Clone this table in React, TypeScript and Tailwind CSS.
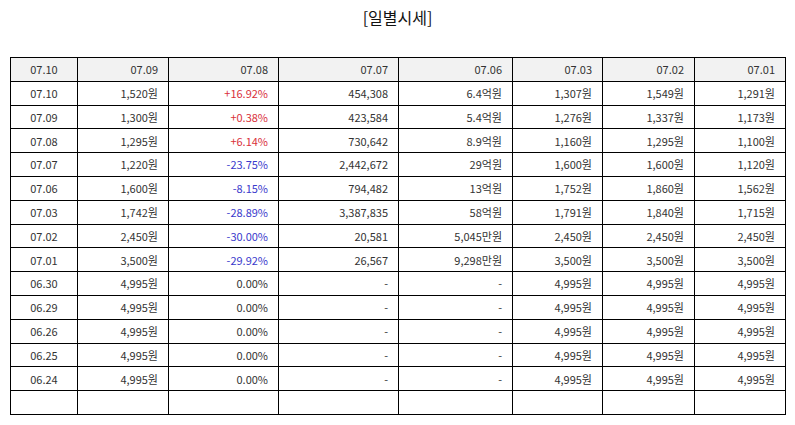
import React from 'react';

type Row = [string, string, string, string, string, string, string, string];

const header: Row = ['07.10', '07.09', '07.08', '07.07', '07.06', '07.03', '07.02', '07.01'];

const rows: Row[] = [
  ['07.10', '1,520원', '+16.92%', '454,308', '6.4억원', '1,307원', '1,549원', '1,291원'],
  ['07.09', '1,300원', '+0.38%', '423,584', '5.4억원', '1,276원', '1,337원', '1,173원'],
  ['07.08', '1,295원', '+6.14%', '730,642', '8.9억원', '1,160원', '1,295원', '1,100원'],
  ['07.07', '1,220원', '-23.75%', '2,442,672', '29억원', '1,600원', '1,600원', '1,120원'],
  ['07.06', '1,600원', '-8.15%', '794,482', '13억원', '1,752원', '1,860원', '1,562원'],
  ['07.03', '1,742원', '-28.89%', '3,387,835', '58억원', '1,791원', '1,840원', '1,715원'],
  ['07.02', '2,450원', '-30.00%', '20,581', '5,045만원', '2,450원', '2,450원', '2,450원'],
  ['07.01', '3,500원', '-29.92%', '26,567', '9,298만원', '3,500원', '3,500원', '3,500원'],
  ['06.30', '4,995원', '0.00%', '-', '-', '4,995원', '4,995원', '4,995원'],
  ['06.29', '4,995원', '0.00%', '-', '-', '4,995원', '4,995원', '4,995원'],
  ['06.26', '4,995원', '0.00%', '-', '-', '4,995원', '4,995원', '4,995원'],
  ['06.25', '4,995원', '0.00%', '-', '-', '4,995원', '4,995원', '4,995원'],
  ['06.24', '4,995원', '0.00%', '-', '-', '4,995원', '4,995원', '4,995원'],
];

const widths = ['w-[67px]', 'w-[91px]', 'w-[110px]', 'w-[120px]', 'w-[114px]', 'w-[90px]', 'w-[92px]', 'w-[91px]'];

function rateColor(v: string) {
  if (v.startsWith('+')) return 'text-[#d9303a]';
  if (v.startsWith('-')) return 'text-[#3a3acc]';
  return 'text-[#333]';
}

export default function App() {
  return (
    <div className="w-[795px] h-[425px] bg-white font-['Noto_Sans_CJK_KR','Noto_Sans',sans-serif]">
      <div className="h-[57px] pt-[5px] text-center text-[16px] leading-[24px] text-[#111]">[일별시세]</div>
      <table className="ml-[10px] w-[775px] table-fixed border-collapse text-[11px] text-[#333]">
        <colgroup>
          {widths.map((w, i) => (
            <col key={i} className={w} />
          ))}
        </colgroup>
        <thead>
          <tr className="h-[23.8px] bg-[#f2f2f2]">
            {header.map((h, i) => (
              <th
                key={i}
                className={`border border-black font-normal p-0 ${i === 0 ? 'text-center' : 'text-right pr-[10px]'}`}
              >
                {h}
              </th>
            ))}
          </tr>
        </thead>
        <tbody>
          {rows.map((r, ri) => (
            <tr key={ri} className="h-[23.8px]">
              {r.map((c, ci) => (
                <td
                  key={ci}
                  className={`border border-black p-0 ${ci === 0 ? 'text-center' : 'text-right pr-[10px]'} ${
                    ci === 2 ? rateColor(c) : ''
                  }`}
                >
                  {c}
                </td>
              ))}
            </tr>
          ))}
          <tr className="h-[23.8px]">
            {header.map((_, i) => (
              <td key={i} className="border border-black p-0" />
            ))}
          </tr>
        </tbody>
      </table>
    </div>
  );
}
